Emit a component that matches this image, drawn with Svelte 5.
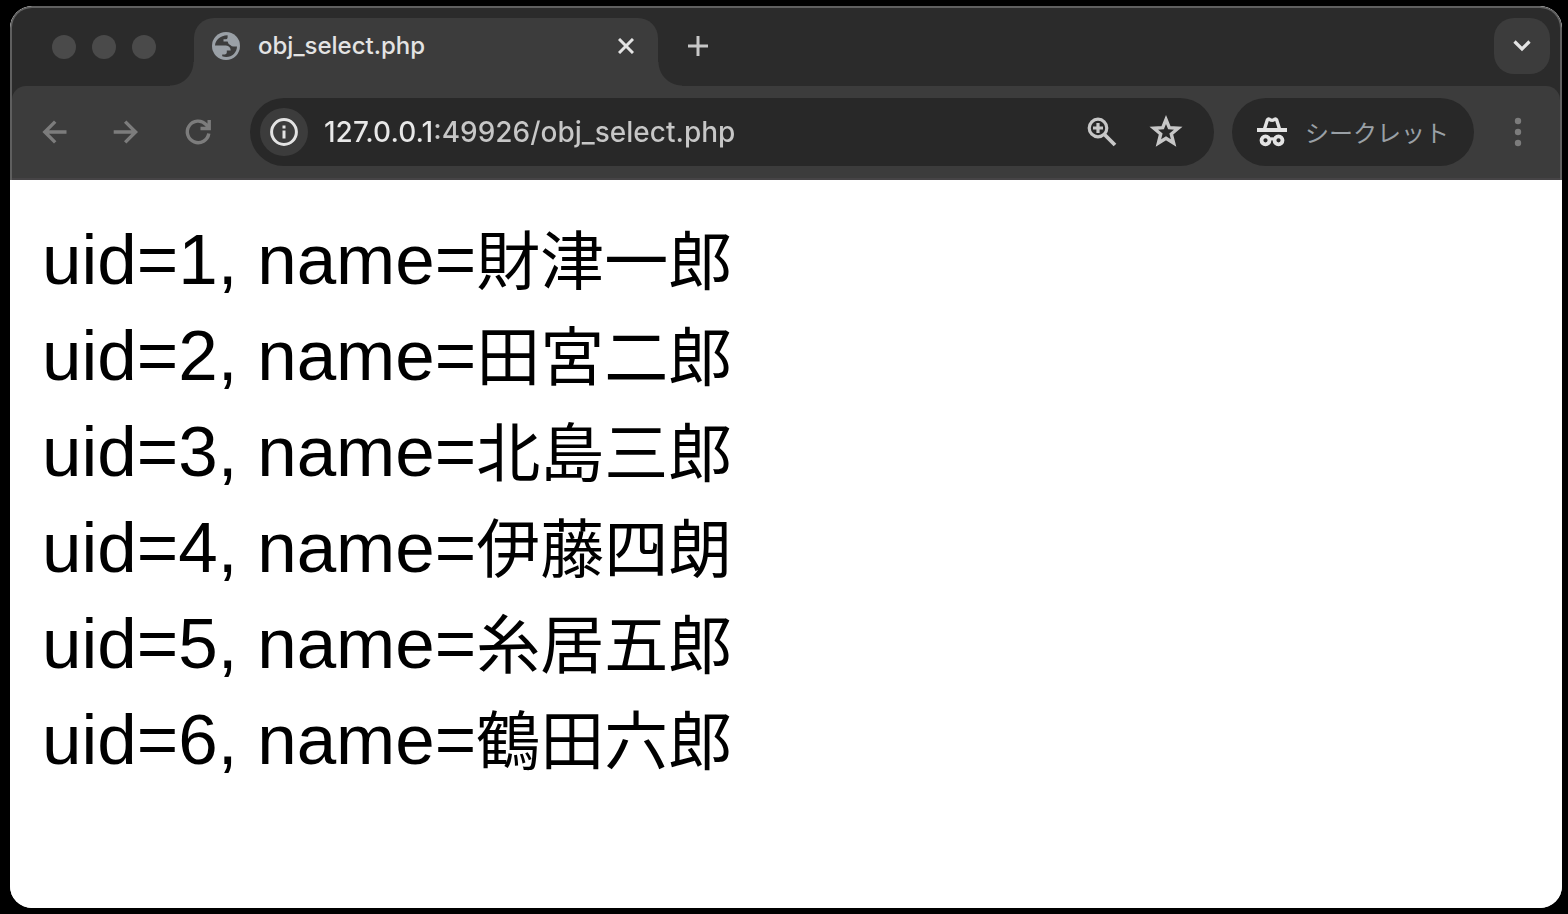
<script>
  const users = [
    { uid: 1, name: '財津一郎' },
    { uid: 2, name: '田宮二郎' },
    { uid: 3, name: '北島三郎' },
    { uid: 4, name: '伊藤四朗' },
    { uid: 5, name: '糸居五郎' },
    { uid: 6, name: '鶴田六郎' }
  ];
  let address = $state('127.0.0.1:49926/obj_select.php');
</script>

<div class="desktop">
  <div class="window">
    <div class="chrome">
      <header class="strip">
        <div class="lights"><i></i><i></i><i></i></div>
        <div class="tab">
          <svg width="28" height="28" viewBox="0 0 28 28" aria-hidden="true">
            <circle cx="14" cy="14" r="14" fill="#9aa0a6" />
            <path d="M3 13.500C3.300 8 8 3.400 15.600 3.200V5.400Q15.600 7.300 13.400 7.300H11.500V9.600H15.600Q16 12.200 18.600 13.200Q19.600 14.500 21.500 14.500H25C25 21.400 18 27 10.200 24.300V22.400H13Q14.800 22.400 14.800 20.600V18.500H18.700Q18.500 14 14 13.500Z" fill="#3c3c3c" />
          </svg>
          <span class="title">obj_select.php</span>
          <button class="close" aria-label="Close tab">
            <svg width="16" height="16" viewBox="0 0 16 16"><path d="M1 1L15 15M15 1L1 15" stroke="#e3e3e3" stroke-width="3" /></svg>
          </button>
        </div>
        <button class="new" aria-label="New tab">
          <svg width="20" height="20" viewBox="0 0 20 20"><path d="M10 0V20M0 10H20" stroke="#c7c7c7" stroke-width="3" /></svg>
        </button>
        <button class="search" aria-label="Search tabs">
          <svg width="18" height="12" viewBox="0 0 18 12"><path d="M1.500 1.500L9 9L16.500 1.500" fill="none" stroke="#e3e3e3" stroke-width="3.200" /></svg>
        </button>
      </header>

      <nav class="toolbar">
        <button class="nav" aria-label="Back">
          <svg width="28" height="28" viewBox="0 0 28 28"><path d="M26.500 14H6M15.200 3.600L4.800 14L15.200 24.400" /></svg>
        </button>
        <button class="nav" aria-label="Forward">
          <svg width="28" height="28" viewBox="0 0 28 28"><path d="M1.700 14H22M13.200 3.600L23.600 14L13.200 24.400" /></svg>
        </button>
        <button class="nav" aria-label="Reload">
          <svg width="28" height="28" viewBox="0 0 28 28"><path d="M24.800 15.500A10.800 10.800 0 1 1 22 6.500L24.500 9M25.200 2V10.500H16.500" /></svg>
        </button>
        <div class="omnibox">
          <button class="info" aria-label="Site information">
            <svg width="28" height="28" viewBox="0 0 28 28"><circle cx="14" cy="14" r="12.400" fill="none" stroke="#e3e3e3" stroke-width="3" /><path d="M14 12.500V20.500M14 7.500V10.500" stroke="#e3e3e3" stroke-width="3" /></svg>
          </button>
          <input class="url" type="text" aria-label="Address" spellcheck="false" bind:value={address} />
          <button class="action" aria-label="Zoom">
            <svg width="30" height="30" viewBox="0 0 30 30" fill="none" stroke="#c7c7c7"><circle cx="11" cy="11" r="8.800" stroke-width="3.200" /><path d="M11 6V16M6 11H16" stroke-width="3.200" /><path d="M17 17L28 28" stroke-width="3.800" /></svg>
          </button>
          <button class="action" aria-label="Bookmark">
            <svg width="34" height="34" viewBox="0 0 34 34"><path d="M17 4.500L20.300 12.600L29.200 13.200L22.300 19L24.600 28L17 23.200L9.400 28L11.700 19L4.800 13.200L13.700 12.600Z" fill="none" stroke="#c7c7c7" stroke-width="3.400" /></svg>
          </button>
        </div>
        <button class="incognito">
          <svg width="30" height="30" viewBox="0 0 30 30" fill="none" stroke="#e3e3e3"><path d="M0 13H30" stroke-width="3.800" /><path d="M7.500 12L10.300 3Q11 1.500 12.500 2.300Q15 4 17.500 2.300Q19 1.500 19.700 3L22.500 12" stroke-width="3.400" /><circle cx="8.500" cy="23.300" r="4" stroke-width="3.800" /><circle cx="21.500" cy="23.300" r="4" stroke-width="3.800" /><path d="M12 22.500Q15 21 18 22.500" stroke-width="3" /></svg>
          <span>シークレット</span>
        </button>
        <button class="menu" aria-label="Menu">
          <svg width="8" height="30" viewBox="0 0 8 30" fill="#7c7c7c"><circle cx="4" cy="4" r="3.200" /><circle cx="4" cy="15" r="3.200" /><circle cx="4" cy="26" r="3.200" /></svg>
        </button>
      </nav>
    </div>

    <main>
      {#each users as user (user.uid)}
        <p>uid={user.uid}, name=<span lang="ja">{user.name}</span></p>
      {/each}
    </main>
  </div>
</div>

<style>
  :global(body) {
    margin: 0;
    background: #000;
  }
  .desktop {
    box-sizing: border-box;
    min-height: 100vh;
    padding: 6px 6px 6px 10px;
    display: flex;
    background: #000;
    font-family: Inter, 'Noto Sans CJK JP', sans-serif;
  }
  .window {
    flex: 1;
    min-width: 0;
    display: flex;
    flex-direction: column;
    border-radius: 22px;
    overflow: hidden;
    background: #fff;
  }
  .chrome {
    border: 2px solid #5f5f5f;
    border-bottom: 0;
    border-radius: 22px 22px 0 0;
    background: #2b2b2b;
  }
  button {
    display: flex;
    align-items: center;
    justify-content: center;
    flex: none;
    padding: 0;
    border: 0;
    background: none;
    font: inherit;
  }
  svg {
    display: block;
    flex: none;
  }
  .strip {
    padding: 10px 10px 0 40px;
    display: flex;
  }
  .lights {
    display: flex;
    gap: 16px;
    padding-top: 17px;
    margin-right: 38px;
  }
  .lights i {
    width: 24px;
    height: 24px;
    border-radius: 50%;
    background: #4a4a4a;
  }
  .tab {
    position: relative;
    box-sizing: border-box;
    flex: 0 1 464px;
    height: 68px;
    padding: 0 22px 12px 18px;
    display: flex;
    align-items: center;
    border-radius: 20px 20px 0 0;
    background: #3c3c3c;
  }
  .tab::before,
  .tab::after {
    content: '';
    position: absolute;
    bottom: 0;
    width: 24px;
    height: 24px;
  }
  .tab::before {
    right: 100%;
    background: radial-gradient(circle at 0 0, transparent 23px, #3c3c3c 24px);
  }
  .tab::after {
    left: 100%;
    background: radial-gradient(circle at 100% 0, transparent 23px, #3c3c3c 24px);
  }
  .title {
    flex: 1;
    margin-left: 18px;
    color: #e3e3e3;
    font-size: 24px;
    font-weight: 500;
    line-height: 32px;
  }
  .close {
    width: 20px;
    height: 32px;
  }
  .new {
    width: 40px;
    height: 56px;
    margin-left: 20px;
  }
  .search {
    width: 56px;
    height: 56px;
    margin-left: auto;
    border-radius: 20px;
    background: #3c3c3c;
  }
  .toolbar {
    padding: 12px 26px 12px 24px;
    display: flex;
    align-items: center;
    border-bottom: 2px solid #464446;
    border-radius: 14px 14px 0 0;
    background: #3c3c3c;
  }
  .nav {
    width: 36px;
    height: 68px;
    margin-right: 36px;
  }
  .nav path {
    fill: none;
    stroke: #7c7c7c;
    stroke-width: 3.4;
  }
  .omnibox {
    box-sizing: border-box;
    flex: 1;
    min-width: 0;
    height: 68px;
    margin-left: -2px;
    padding: 0 30px 0 10px;
    display: flex;
    align-items: center;
    border-radius: 34px;
    background: #282828;
  }
  .info {
    width: 48px;
    height: 48px;
    border-radius: 50%;
    background: #3c3c3c;
  }
  .url {
    flex: 1;
    min-width: 0;
    height: 48px;
    margin-left: 16px;
    padding: 0;
    border: 0;
    outline: 0;
    color: transparent;
    background: linear-gradient(90deg, #e8e8e8 110px, #c7c7c7 110px);
    background-clip: text;
    font-family: Inter, sans-serif;
    font-size: 28px;
    font-weight: 500;
  }
  .action {
    width: 36px;
    height: 48px;
    margin-left: 28px;
  }
  .incognito {
    height: 68px;
    margin-left: 18px;
    padding: 0 25px;
    gap: 18px;
    border-radius: 34px;
    background: #282828;
    color: #9aa0a6;
    font-family: 'Noto Sans CJK JP', sans-serif;
    font-size: 24px;
  }
  .incognito span {
    padding-bottom: 2px;
  }
  .menu {
    width: 32px;
    height: 68px;
    margin-left: 28px;
  }
  main {
    flex: 1;
    padding: 32px;
    background: #fff;
  }
  p {
    margin: 0;
    color: #000;
    font-family: 'Liberation Sans', sans-serif;
    font-size: 71px;
    line-height: 96px;
  }
  p span {
    font-family: 'Noto Sans CJK JP', sans-serif;
    font-size: 64px;
    line-height: 1;
  }
</style>
